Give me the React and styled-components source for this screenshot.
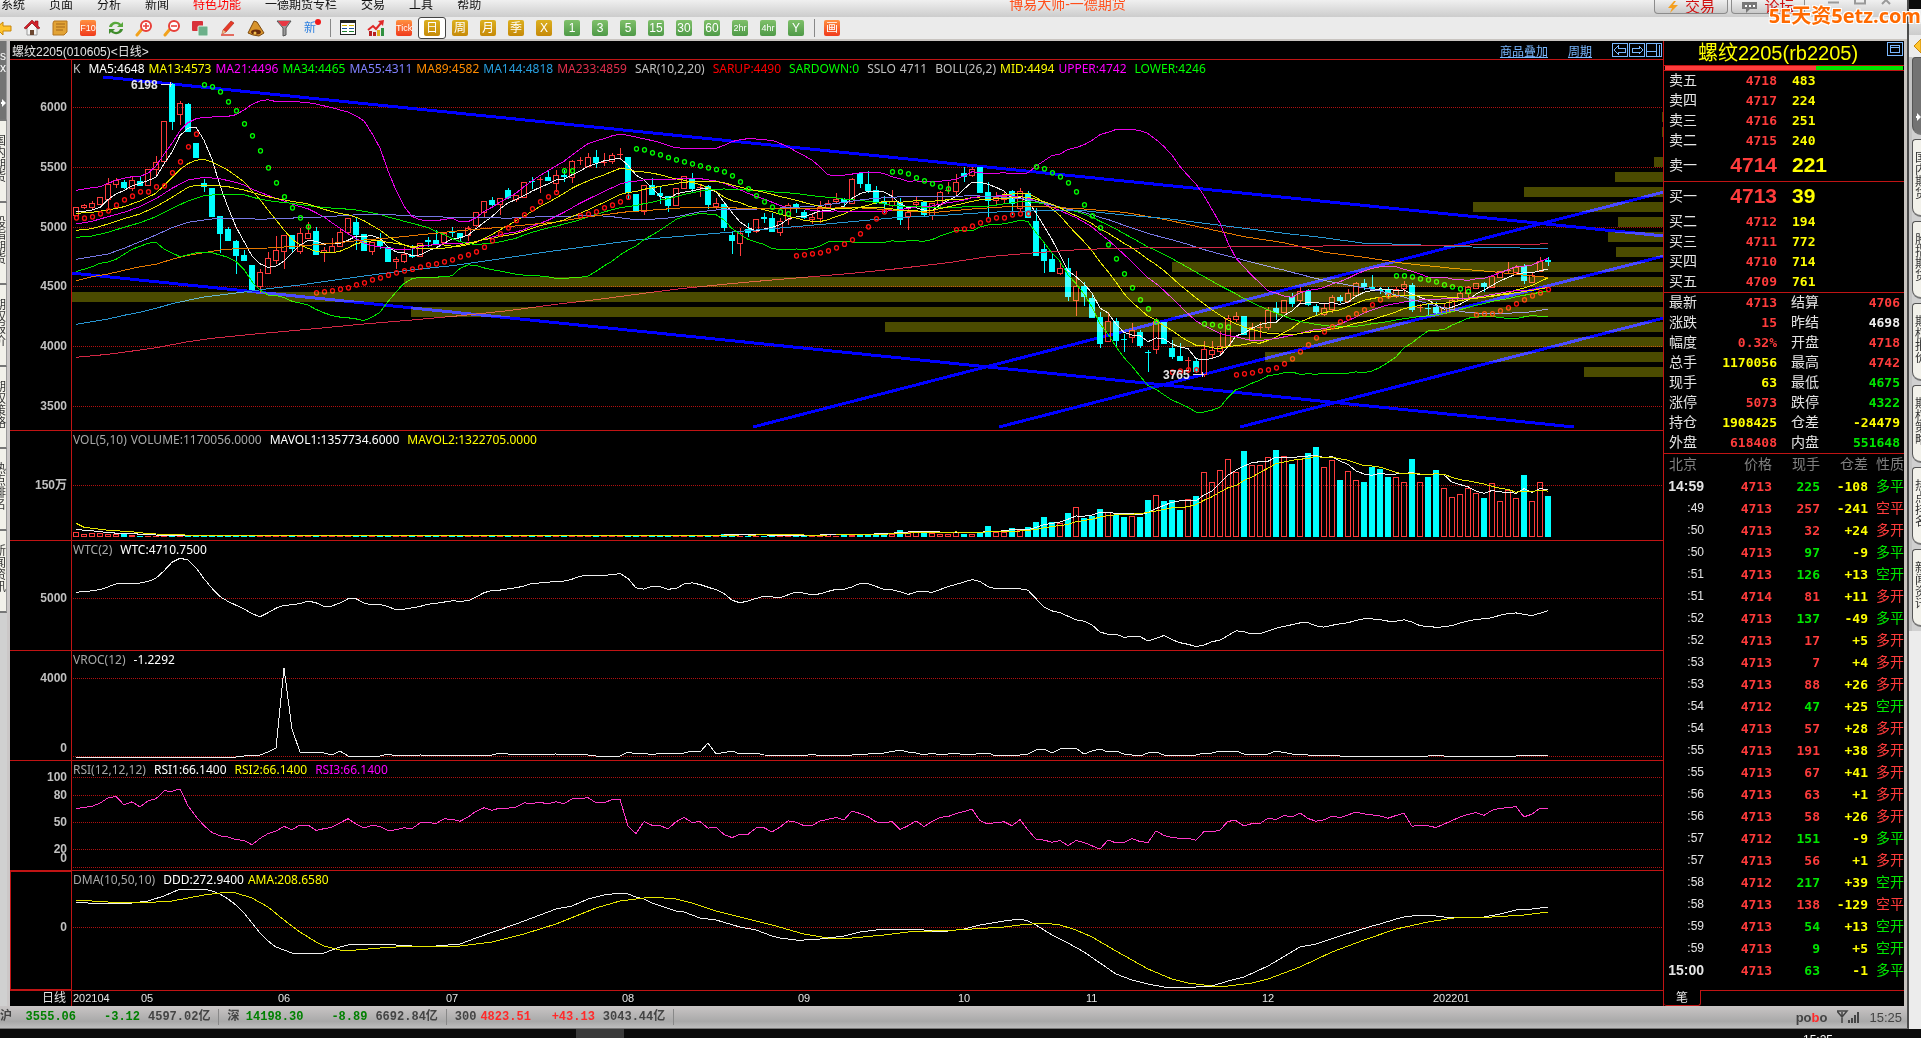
import React from 'react';
import styled, { createGlobalStyle } from 'styled-components';

const RED = '#ff3c3c';
const CYAN = '#00ffff';
const YELLOW = '#ffff00';
const GREEN = '#00e600';
const MAGENTA = '#ff00ff';
const LINE = '#c01414';

const GlobalStyle = createGlobalStyle`
  * { box-sizing: border-box; }
  body {
    margin: 0;
    background: #0b0b0b;
    font-family: "Liberation Sans", "Noto Sans CJK SC", sans-serif;
    font-size: 12px;
  }
  button {
    border: 0;
    padding: 0;
    background: none;
    font: inherit;
    color: inherit;
    cursor: pointer;
  }
`;

const Desktop = styled.div`
  position: relative;
  overflow: hidden;
  min-height: 100vh;
`;

const Windows = styled.div`
  display: flex;
`;

const MainWindow = styled.div`
  flex: 1;
  min-width: 0;
  border-right: 2px solid #4c4c4c;
  border-bottom: 1px solid #777;
  background: #c8c4c0;
`;

const MenuBar = styled.header`
  display: grid;
  grid-template-columns: 1fr auto 1fr;
  height: 17px;
  background: linear-gradient(#f0f0f0, #cccccc);
  color: #111;
`;

const Menu = styled.nav`
  display: flex;
  gap: 24px;
  padding-left: 1px;
  line-height: 10px;
  height: 12px;
  button {
    white-space: nowrap;
    height: 10px;
  }
`;

const MenuButton = styled.button`
  color: ${(p) => (p.$hot ? '#ff0000' : '#111')};
`;

const AppTitle = styled.div`
  font-size: 14px;
  line-height: 9px;
  color: #ff4f1a;
  padding-left: 228px;
`;

const WindowTools = styled.div`
  display: flex;
  justify-content: flex-end;
  gap: 3px;
  padding-right: 5px;
  svg { display: block; }
`;

const BigButton = styled.button`
  width: 74px;
  height: 14px;
  overflow: hidden;
  display: flex;
  justify-content: center;
  align-items: center;
  gap: 6px;
  border: 1px solid #8c8c8c;
  border-top: 0;
  border-radius: 0 0 4px 4px;
  background: linear-gradient(#efefef, #c9c9c9);
  color: #d01010;
  font-size: 15px;
  line-height: 10px;
`;

const WindowButtons = styled.div`
  display: flex;
  gap: 6px;
  width: 94px;
  height: 6px;
  padding-left: 15px;
`;

const ToolBar = styled.div`
  display: flex;
  align-items: center;
  height: 24px;
  margin-left: -10px;
  background: #ebebeb;
  border-bottom: 2px solid #c8c4c0;
`;

const Tool = styled.button`
  width: 28px;
  height: 22px;
  flex: none;
  display: flex;
  justify-content: center;
  align-items: center;
  ${(p) => p.$active && `
    background: #fff;
    border: 1px solid #444;
    border-radius: 3px;
  `}
  svg { display: block; }
`;

const tileColors = {
  gold: 'linear-gradient(#dcb020, #c68a08)',
  green: 'linear-gradient(#7fc06a, #4f9a48)',
  red: 'linear-gradient(#ff9040, #f03a1c)',
};

const Tile = styled.span`
  width: 16px;
  height: 16px;
  border-radius: 2px;
  background: ${(p) => tileColors[p.$tone]};
  color: #fff;
  font-size: ${(p) => (p.$small ? 9 : 12)}px;
  line-height: 16px;
  text-align: center;
  white-space: nowrap;
`;

const Separator = styled.span`
  width: 1px;
  height: 18px;
  margin: 0 3px 0 4px;
  background: #888;
`;

const Workspace = styled.main`
  display: flex;
  padding-right: 3px;
`;

const SideTabs = styled.aside`
  width: ${(p) => (p.$right ? 12 : 10)}px;
  flex: none;
  overflow: hidden;
  background: #d0d0d0;
  border-right: ${(p) => (p.$right ? 0 : '3px solid #cbc7c7')};
  border-left: ${(p) => (p.$right ? '3px solid #c4c4c4' : 0)};
`;

const SideTab = styled.button`
  display: flex;
  flex-direction: ${(p) => (p.$active ? 'column' : 'row')};
  align-items: center;
  justify-content: ${(p) => (p.$active ? 'space-between' : p.$right ? 'flex-start' : 'flex-end')};
  width: 100%;
  height: ${(p) => (p.$right ? 78 : p.$active ? 80 : 82)}px;
  margin-bottom: ${(p) => (p.$right ? 4 : 0)}px;
  padding: ${(p) => (p.$active ? '9px 0 12px' : '0 0 4px')};
  padding-left: ${(p) => (p.$right ? 2 : 0)}px;
  background: ${(p) => (p.$active ? '#737373' : '#f2f1ea')};
  color: ${(p) => (p.$active ? '#fff' : '#333')};
  border-bottom: 2px solid #777;
  ${(p) => (p.$right
    ? 'border-left: 1px solid #555; border-top: 1px solid #555; border-radius: 4px 0 0 10px;'
    : 'border-right: 1px solid #999;')}
  span {
    width: 12px;
    flex: none;
    line-height: 12px;
    white-space: normal;
    overflow-wrap: anywhere;
  }
  svg { flex: none; }
`;

const Charts = styled.section`
  flex: 1;
  min-width: 0;
  background: #000;
`;

const ChartHead = styled.div`
  display: flex;
  align-items: center;
  height: 19px;
  padding-left: 2px;
  border-bottom: 1px solid ${LINE};
  color: #e4e4e4;
  a {
    color: #7ab8ff;
    margin-right: 20px;
  }
`;

const HeadTools = styled.div`
  display: flex;
  align-items: center;
  margin-left: auto;
  svg { margin-right: 1px; }
`;

const Pane = styled.div`
  display: grid;
  grid-template-columns: 62px 1fr;
  height: ${(p) => p.$height}px;
  border-bottom: 1px solid ${LINE};
`;

const Axis = styled.div`
  border-right: 1px solid ${LINE};
  ${(p) => p.$selected && `outline: 1px solid ${LINE}; outline-offset: -1px;`}
  svg { display: block; }
  text {
    font: bold 12px "Liberation Sans", "Noto Sans CJK SC", sans-serif;
    fill: #c0c0c0;
    text-anchor: end;
  }
`;

const Plot = styled.div`
  position: relative;
  min-width: 0;
  > svg {
    display: block;
    width: 100%;
    height: 100%;
  }
`;

const Legend = styled.div`
  position: absolute;
  z-index: 1;
  top: 1px;
  left: 1px;
  display: flex;
  gap: 4px;
  font-family: "Noto Sans", sans-serif;
  line-height: 16px;
  white-space: nowrap;
`;

const LegendItem = styled.span`
  color: ${(p) => p.$color};
  margin-left: ${(p) => (p.$group ? 4 : 0)}px;
`;

const DateAxis = styled.div`
  display: grid;
  grid-template-columns: 62px 1fr;
  height: 15px;
  line-height: 15px;
  color: #e4e4e4;
  > span {
    text-align: right;
    padding-right: 5px;
    border-right: 1px solid ${LINE};
  }
  svg {
    display: block;
    width: 100%;
  }
  text {
    font: 11px "Liberation Sans", sans-serif;
    fill: #e4e4e4;
  }
`;

const Quote = styled.aside`
  width: 241px;
  flex: none;
  border-left: 1px solid ${LINE};
  background: #000;
  color: #e4e4e4;
`;

const QuoteHead = styled.div`
  display: flex;
  height: 24px;
  padding: 0 1px 0 34px;
  justify-content: space-between;
  color: ${YELLOW};
  font-size: 20px;
  line-height: 24px;
  svg { display: block; margin-top: 1px; }
`;

const Ratio = styled.div`
  display: flex;
  height: 6px;
  padding: 0 1px;
  border: solid ${LINE};
  border-width: 1px 0;
  &::before { content: ""; flex: 151; background: ${RED}; }
  &::after { content: ""; flex: 87; background: ${GREEN}; }
`;

const Book = styled.div`
  border-bottom: 1px solid ${LINE};
`;

const BookRow = styled.div`
  display: grid;
  grid-template-columns: 40px 68px 44px 1fr;
  align-items: center;
  height: ${(p) => (p.$best ? 30 : 20)}px;
  padding: 0 4px 2px 5px;
  font-size: 14px;
  line-height: 18px;
`;

const Num = styled.b`
  font: bold 13px "DejaVu Sans Mono", monospace;
  text-align: right;
  color: ${(p) => p.$color};
  ${(p) => p.$best && 'font: bold 21px "Liberation Sans", sans-serif;'}
  ${(p) => p.$left && 'text-align: left; padding-left: 15px;'}
`;

const StatLabel = styled.span`
  padding-left: ${(p) => (p.$second ? 14 : 0)}px;
`;

const Ticks = styled.table`
  width: 100%;
  table-layout: fixed;
  border-collapse: collapse;
  margin-bottom: 8px;
  font-size: 14px;
  tr { height: 22px; }
  th, td {
    padding: 0;
    text-align: right;
    vertical-align: top;
    font-weight: normal;
    line-height: 20px;
    white-space: nowrap;
  }
  th { color: #808080; }
  th:first-child { text-align: left; padding-left: 5px; }
`;

const TickTime = styled.td`
  && {
    font-size: ${(p) => (p.$full ? 14 : 12)}px;
    font-weight: ${(p) => (p.$full ? 'bold' : 'normal')};
  }
`;

const Kind = styled.td`
  color: ${(p) => p.$color};
`;

const QuoteTabs = styled.div`
  display: flex;
  height: 16px;
  button {
    width: 37px;
    border: 1px solid ${LINE};
    border-width: 0 1px 1px 0;
    border-radius: 0 0 3px 3px;
    line-height: 14px;
  }
  &::after {
    content: "";
    flex: 1;
    border-top: 1px solid ${LINE};
  }
`;

const StatusBar = styled.footer`
  display: flex;
  align-items: center;
  height: 22px;
  padding-right: 5px;
  background: linear-gradient(#c9c5c5, #a9a9a9 70%, #bdbdbd);
  color: #444;
  font: bold 12px "Liberation Mono", "Noto Sans CJK SC", monospace;
`;

const Index = styled.div`
  display: grid;
  grid-template-columns: ${(p) => p.$cols};
  align-items: baseline;
  height: 16px;
  line-height: 16px;
  padding-right: 8px;
  margin-right: 8px;
  border-right: 1px solid #888;
  white-space: nowrap;
  i {
    font-style: normal;
    text-align: right;
    padding-right: 8px;
    color: ${(p) => p.$color};
  }
`;

const StatusRight = styled.div`
  display: flex;
  align-items: center;
  gap: 10px;
  margin-left: auto;
  font: 13px "Liberation Sans", sans-serif;
  b em { font-style: normal; color: #ff2a2a; }
`;

const SecondWindow = styled.div`
  width: 12px;
  flex: none;
  margin-top: 9px;
  background: #ececec;
  > svg { display: block; }
`;

const SecondHead = styled.div`
  height: 26px;
  background: linear-gradient(#f2f2f2, #cccccc);
`;

const TaskBar = styled.div`
  display: flex;
  height: 9px;
  overflow: hidden;
  background: #0b0b0b;
  color: #fff;
  line-height: 22px;
  padding-left: 576px;
  justify-content: space-between;
  &::before { content: ""; width: 48px; background: #3a3a3a; }
  span { padding-right: 88px; }
`;

const Watermark = styled.div`
  position: absolute;
  top: 0;
  right: 0;
  font: bold 20px/32px "Open Sans", "Noto Sans CJK SC", sans-serif;
  color: #ff6a00;
  text-shadow: 1px 1px 0 #fff, -1px -1px 0 #fff, 1px -1px 0 #fff, -1px 1px 0 #fff;
`;

// ---------- chart data ----------
// Levels are kept in thirds of a pixel: direction, body, then high/low wick.
const candles = `
r622-645 r616-622/612-627 r610-622/603-627 r592-612 r552-598/535-625 r540-553/533-565 c545-563/541-567 r541-565/530-572
c543-557/530-558 r508-556 r487-506/468-530 r364-482 c253-365/250-390 r310-343/303-375 c312-395/308-395 c430-473
c550-562/537-575 c565-650 c648-702/648-760 c688-722/680-722 c723-767/720-822 c766-782/750-782 c795-869 r817-858/808-880
r775-818/755-818 r750-780/708-793 r706-752/706-808 c706-748/706-760 r700-752/685-762 r700-713/665-715 c693-765/680-765
r750-757/742-785 r737-755/715-755 r697-737/685-737 r655-697 c666-705/650-750 c702-752 r725-752/725-765 c723-738/700-748
c741-785 r778-782/770-806 r763-784/740-790 c765-770/735-773 r728-769 c720-725/710-740 c720-732/690-732 r698-725
c697-700/682-712 c700-713/700-723 r683-706/678-722 r637-674/637-680 r602-637/602-655 c600-615/592-622 r595-612/595-645
c570-595/565-598 r586-597/586-606 r545-590 c543-547/530-567 r538-541/530-578 c532-543/512-543 r525-548/510-576
c526-532/510-545 r484-532/480-550 r481-484/472-495 r472-497/460-497 c472-488/450-503 r487-490/460-497 r464-484/458-492
r461-464/444-480 c472-578/472-600 c582-637 r556-632/556-645 c555-585/535-585 c578-588/562-612 c588-617/588-637 r565-614
r527-565 c536-566/520-575 r560-565/553-590 c559-615/555-627 r608-618/595-627 c612-683/612-692 c705-722/695-762
r700-730/683-767 c688-700/668-712 r658-694/658-700 c652-656/640-668 c655-695/640-695 r663-697/655-708 r615-658/608-675
c613-625/608-640 c635-653/630-657 r652-657/640-672 r622-654/603-670 r608-622/600-628 r596-602/580-612 c598-610/593-622
r538-610/533-610 c520-553/520-565 c552-572/513-578 c570-605/558-612 c602-612/588-640 r603-615/570-620 c605-660/593-675
r637-647/625-690 r605-613/590-620 c606-645/606-648 r610-645/610-660 r577-612/573-625 r571-574/545-583 r547-574/522-592
c519-530/500-545 r508-525/500-530 c502-578 c577-602/545-655 r592-600/577-612 r587-597/575-610 c573-613/570-645
r572-625/564-632 c578-655/573-655 c663-768/625-768 c747-782/727-820 c777-815/760-815 r805-818/788-825 c804-890/773-902
r857-900/812-948 c857-890/845-918 c893-953/880-953 c950-1031/935-1043 r963-1022/935-1022 c963-1022/955-1045
c1016-1019/1003-1055 r990-1010/970-1028 c996-1038/990-1045 c1055-1058/1050-1115 r963-1046/955-1063 c967-1033
c1044-1070/1020-1076 c1068-1082/1030-1082 r1080-1083/1070-1118 c1083-1117/1075-1120 r1047-1123/1022-1130
r1051-1061/1023-1073 r1037-1052/993-1065 r955-1037/945-1037 r948-956/937-965 c948-1004 r980-1021/968-1023
r980-983/967-1013 r930-980/920-990 c923-940/905-960 r901-935/901-940 c890-912/880-920 r873-901/860-912 c873-914/867-918
c918-936/912-945 r924-941/910-948 r890-927/885-938 c890-902/885-910 r879-902/868-908 r850-884/845-884 c849-862/838-870
c860-868/825-870 c866-874/860-882 c866-886/862-897 r868-888/862-895 r852-865/842-888 c855-930/850-937 r922-925/912-935
c925-928/910-945 c920-938/907-945 r920-938/910-943 r900-933/895-933 r879-900/873-900 r862-880/857-900 r850-864
c849-862/845-877 r828-862 r812-830 r810-813/787-822 r801-817/795-825 c797-842/793-853 r825-846/820-848 r783-812/770-815
c780-786/770-798`.trim().split(/\s+/).map((s) => {
  const [top, bottom, high, low] = s.match(/\d+/g).map(Number);
  const up = s[0] === 'r';
  return { up, top, bottom, high: high || top, low: low || bottom, close: up ? top : bottom };
});

const volumes = [15, 9, 12, 12, 10, 8, 8, 6];
while (volumes.length < 79) volumes.push(3);
volumes.push(5, 4, 8, 8, 4, 4, 4, 4, 4, 4, 4, 4, 4, 5, 5, 8, 4, 5, 6, 8, 10, 10, 12, 10, 20, 16, 16, 14, 12,
  10, 10, 16, 8, 8, 16, 32, 14, 16, 26, 20, 29, 44, 59, 44, 42, 71, 91, 56, 62, 83, 76, 66, 59, 64, 59, 110, 127,
  107, 110, 80, 115, 122, 196, 166, 202, 235, 196, 257, 217, 217, 241, 260, 244, 218, 235, 251, 269, 211, 232, 170,
  199, 172, 164, 211, 203, 179, 181, 166, 233, 166, 179, 200, 148, 121, 130, 148, 133, 116, 163, 109, 142, 118, 185,
  109, 166, 122);

const closes = candles.map((c) => c.close);
const X = (i) => 76 + i * 8;

const average = (list, n, i) => list.slice(i - n + 1, i + 1).reduce((a, b) => a + b, 0) / n;

// lead holds [index, level] pairs for the stretch before n values exist
const movingAverage = (list, n, lead = []) => {
  const out = lead.slice();
  for (let i = n - 1; i < list.length; i++) out.push([i, average(list, n, i)]);
  return out;
};

const band = (side, lead) => {
  const out = lead.slice();
  for (let i = 25; i < closes.length; i++) {
    const mid = average(closes, 26, i);
    const dev = Math.sqrt(closes.slice(i - 25, i + 1).reduce((a, c) => a + (c - mid) ** 2, 0) / 26);
    out.push([i, mid + side * 2 * dev]);
  }
  return out;
};

const thirds = (list) => list.map(([i, v]) => [i, v / 3]);
const toPoints = (list) => list.map(([i, y]) => `${X(i)},${y.toFixed(1)}`).join(' ');

const ma89 = [[0, 842], [2, 830], [4, 822], [6, 811], [8, 800], [10, 793], [12, 778], [14, 766], [16, 758], [18, 750],
  [20, 746], [24, 744], [28, 738], [32, 730], [36, 720], [40, 712], [44, 702], [48, 692], [54, 680], [60, 666], [63, 654],
  [66, 644], [69, 635], [71, 632], [76, 623], [81, 623], [86, 626], [92, 627], [97, 622], [102, 630], [107, 638],
  [112, 627], [117, 619], [120, 619], [126, 627], [131, 637], [136, 658], [141, 684], [146, 710], [151, 728], [156, 757],
  [161, 772], [166, 790], [172, 805], [177, 815], [182, 828], [184, 832]];
const ma144 = [[0, 973], [2, 965], [4, 957], [6, 946], [8, 937], [10, 925], [12, 911], [14, 901], [16, 891], [19, 882],
  [22, 873], [24, 866], [28, 855], [33, 838], [41, 812], [47, 797], [52, 780], [59, 755], [70, 720], [76, 708], [81, 698],
  [89, 682], [97, 665], [102, 654], [109, 645], [114, 637], [120, 632], [126, 632], [131, 645], [136, 655], [141, 670],
  [146, 685], [151, 700], [156, 713], [161, 730], [166, 733], [171, 738], [177, 743], [184, 745]];
const ma233 = [[0, 1072], [4, 1063], [8, 1050], [10, 1043], [12, 1034], [14, 1025], [17, 1015], [22, 1003], [29, 988],
  [36, 972], [42, 960], [48, 947], [54, 932], [60, 913], [65, 899], [71, 880], [76, 865], [81, 853], [86, 842],
  [92, 830], [97, 820], [102, 808], [109, 788], [114, 770], [120, 758], [126, 748], [133, 744], [141, 742], [151, 739],
  [161, 737], [171, 736], [182, 733], [184, 731]];

const overlays = [
  ['#eeeeee', movingAverage(closes, 5, [[0, 636], [1, 634], [2, 630], [3, 622]])],
  ['#e6e600', movingAverage(closes, 13, [[0, 640], [2, 637], [4, 630], [6, 620], [8, 603], [10, 580]])],
  ['#e600e6', movingAverage(closes, 21, [[0, 672], [2, 664], [4, 650], [6, 637], [8, 620], [10, 596], [12, 565],
    [14, 540], [16, 532], [18, 536]])],
  ['#00e600', movingAverage(closes, 34, [[0, 712], [2, 708], [4, 697], [6, 682], [8, 668], [10, 650], [12, 625],
    [14, 603], [16, 587], [18, 583], [21, 584], [23, 598], [25, 605], [27, 610], [30, 620]])],
  ['#7878e6', movingAverage(closes, 55, [[0, 778], [2, 770], [4, 762], [6, 745], [8, 725], [10, 705], [12, 683],
    [14, 667], [16, 660], [18, 654], [21, 655], [23, 658], [26, 655], [30, 652], [36, 643], [40, 645], [44, 650],
    [50, 653]])],
  ['#e67800', ma89],
  ['#2896d2', ma144],
  ['#d22846', ma233],
  ['#e6e600', movingAverage(closes, 26, [[0, 691], [2, 686], [4, 672], [6, 656], [8, 642], [10, 620], [12, 592],
    [14, 562], [15, 556], [17, 556], [19, 560], [21, 570], [23, 584]])],
  ['#e600e6', band(-1, [[0, 571], [1, 567], [2, 563], [3, 560], [4, 550], [5, 541], [6, 535], [7, 530], [8, 529],
    [9, 520], [10, 498], [11, 463], [12, 430], [13, 392], [14, 368], [15, 356], [16, 352], [18, 350], [19, 349],
    [20, 344], [21, 330], [22, 313], [23, 303], [24, 299]])],
  ['#00e600', band(1, [[0, 815], [2, 800], [3, 790], [4, 786], [5, 778], [7, 748], [9, 730], [10, 727], [11, 747],
    [13, 770], [15, 758], [17, 758], [19, 772], [20, 785], [21, 808], [22, 845], [23, 870], [24, 885]])],
];

const UP_DOT = '#ff1010';
const DOWN_DOT = '#00ff00';

const sar = [
  [UP_DOT, 0, [652, 653, 649, 640, 631, 614, 598, 587, 574, 574, 559, 556, 517, 484, 439, 401]],
  [DOWN_DOT, 16, [253, 259, 274, 304, 331, 370, 406, 451, 502, 547, 589, 622, 652, 679]],
  [UP_DOT, 30, [877, 874, 871, 866, 862, 853, 847, 838, 832, 824, 817, 811, 806, 800, 793, 790, 784, 778, 769, 763, 754,
    740, 721, 700, 682, 660, 643, 625, 604, 589, 576]],
  [DOWN_DOT, 61, [511, 511]],
  [UP_DOT, 63, [646, 641, 634, 622, 614, 604, 590]],
  [DOWN_DOT, 70, [445, 448, 457, 463, 471, 478, 484, 490, 496, 502, 507, 514, 526, 544, 565, 586, 604, 620, 634, 640]],
  [UP_DOT, 90, [766, 763, 760, 757, 751, 742, 731, 718, 700, 679, 655, 634]],
  [DOWN_DOT, 102, [514, 514, 520, 532, 541, 550, 559, 565]],
  [UP_DOT, 110, [688, 686, 677, 667, 658, 652, 652, 643, 640, 640]],
  [DOWN_DOT, 120, [499, 505, 517, 529, 547, 574, 613, 646, 682, 733, 775, 820, 862, 898, 925, 964]],
  [UP_DOT, 137, [1115, 1112, 1108, 1108]],
  [DOWN_DOT, 141, [970, 972, 976, 980]],
  [UP_DOT, 145, [1123, 1120, 1117, 1111, 1108, 1102, 1090, 1075, 1054, 1033, 1012, 994, 979, 964, 952, 940, 928, 913,
    898, 886]],
  [DOWN_DOT, 165, [826, 826, 829, 835, 838, 844, 853, 859, 865, 873]],
  [UP_DOT, 175, [943, 940, 940, 931, 922, 910, 898, 886, 877, 867]],
];

// volume by price: one bar every 15px, null where a level has none
const profile = [1662, 1662, null, 1654, 1615, 1524, 1473, 1618, 1608, 1616, 1172, 404, 71, 411, 885, 1172, 1265, 1584];

const trends = [[103, 77, 1664, 236], [71, 273, 1574, 427], [753, 427, 1664, 192], [999, 427, 1664, 256], [1240, 427, 1664, 318]];

const wtcBase = candles.map((c) => (c.high + c.low + 2 * c.close) / 12);
const wtc = wtcBase.map((v, i) => [i, 598.5 + ((v + (i ? wtcBase[i - 1] : v)) / 2 - 227.3) * 0.347]);

const rsi = [];
let gain = 9.8;
let loss = 5.2;
closes.forEach((c, i) => {
  if (i) {
    const d = closes[i - 1] - c;
    gain = (gain * 11 + Math.max(d, 0)) / 12;
    loss = (loss * 11 + Math.max(-d, 0)) / 12;
  }
  rsi.push([i, 867.3 - (gain / (gain + loss)) * 90]);
});

const vroc = [[0, 757], [20, 757], [22, 755], [23, 755], [24, 752], [25, 748], [26, 668], [27, 729], [28, 752], [31, 753],
  [32, 755], [33, 751], [34, 756], [38, 756], [39, 754], [40, 756], [43, 755], [48, 756], [52, 755], [53, 753], [55, 755],
  [60, 754], [64, 755], [65, 756], [68, 756], [69, 752], [70, 754], [71, 753], [72, 755], [73, 753], [76, 753], [77, 751],
  [78, 752], [79, 743], [80, 754], [82, 751], [83, 754], [85, 753], [86, 755], [91, 756], [92, 754], [93, 756], [97, 755],
  [101, 753], [103, 750], [104, 752], [105, 753], [106, 755], [107, 753], [108, 755], [110, 753], [111, 755], [114, 753],
  [115, 756], [118, 755], [119, 754], [120, 750], [121, 749], [122, 753], [123, 749], [125, 748], [126, 754], [127, 751],
  [128, 749], [129, 752], [130, 751], [131, 754], [133, 756], [134, 753], [135, 752], [136, 755], [140, 755], [141, 753],
  [142, 753], [143, 751], [145, 751], [146, 754], [149, 754], [150, 751], [152, 754], [156, 756], [157, 755], [158, 756],
  [169, 756], [170, 755], [171, 756], [180, 756], [181, 755], [182, 756], [183, 755], [184, 756]];

const ddd = [[0, 902], [3, 904], [7, 903], [9, 901], [11, 896], [13, 889], [16, 889], [17, 891], [18, 894], [19, 899],
  [20, 905], [21, 913], [22, 923], [23, 933], [24, 941], [25, 947], [26, 950], [27, 953], [31, 953], [33, 947], [34, 945],
  [36, 944], [38, 944], [42, 946], [45, 946], [48, 944], [50, 938], [55, 924], [60, 909], [62, 906], [64, 899], [66, 895],
  [68, 893], [69, 894], [70, 897], [71, 899], [72, 903], [75, 911], [76, 912], [78, 918], [80, 920], [83, 927], [85, 930],
  [87, 936], [88, 938], [90, 940], [91, 940], [93, 939], [96, 936], [98, 932], [101, 929], [105, 929], [107, 931],
  [109, 931], [111, 929], [113, 925], [116, 921], [118, 919], [119, 921], [120, 925], [122, 935], [124, 943], [126, 952],
  [130, 974], [132, 980], [134, 984], [136, 987], [140, 987], [142, 986], [144, 981], [146, 977], [149, 966], [153, 947],
  [155, 944], [158, 936], [162, 926], [163, 924], [165, 919], [166, 917], [168, 915], [170, 916], [171, 917], [176, 917],
  [178, 914], [180, 910], [182, 909], [184, 907]];
const ama = [[0, 900], [4, 902], [8, 903], [12, 901], [14, 898], [16, 895], [18, 893], [19, 892], [20, 893], [22, 898],
  [24, 907], [26, 920], [28, 932], [30, 942], [31, 946], [33, 950], [35, 950], [38, 948], [42, 946], [48, 946], [52, 942],
  [56, 934], [60, 924], [65, 908], [68, 901], [71, 898], [72, 897], [75, 899], [77, 903], [80, 911], [83, 917], [87, 925],
  [91, 934], [94, 938], [97, 938], [101, 935], [104, 932], [107, 931], [110, 930], [116, 927], [118, 925], [121, 923],
  [123, 925], [125, 930], [127, 937], [130, 951], [134, 969], [137, 979], [139, 983], [142, 986], [144, 986], [147, 983],
  [149, 979], [153, 967], [157, 952], [161, 940], [165, 929], [169, 922], [173, 917], [177, 917], [181, 915], [184, 912]];

// ---------- chart pieces ----------
const Curve = ({ color, data, width = 1 }) => (
  <polyline points={toPoints(data)} fill="none" stroke={color} strokeWidth={width} shapeRendering="crispEdges" />
);

const ChartPane = ({ top, height, ticks, legend, selected, children }) => (
  <Pane $height={height + 1}>
    <Axis $selected={selected}>
      <svg width="61" height={height} viewBox={`10 ${top} 61 ${height}`}>
        {ticks.map(([label, y, at]) => (
          <text key={label} x="67" y={(at || y) + 4}>{label}</text>
        ))}
      </svg>
    </Axis>
    <Plot>
      <Legend>
        {legend.map(([text, color, group]) => (
          <LegendItem key={text} $color={color} $group={group}>{text}</LegendItem>
        ))}
      </Legend>
      <svg viewBox={`72 ${top} 1591 ${height}`} preserveAspectRatio="none">
        {ticks.map(([label, y]) => (
          <line key={label} x1="73" x2="1662" y1={y + 0.5} y2={y + 0.5} stroke="#b01010" strokeDasharray="1 1" shapeRendering="crispEdges" />
        ))}
        {children}
      </svg>
    </Plot>
  </Pane>
);

const Candle = ({ data, i }) => {
  const x = X(i);
  const color = data.up ? RED : CYAN;
  const top = Math.round(data.top / 3);
  const h = Math.max(1, Math.round(data.bottom / 3) - top);
  const high = Math.round(data.high / 3);
  const low = Math.round(data.low / 3);
  return (
    <g shapeRendering="crispEdges">
      {high < top && <rect x={x} y={high} width="1" height={top - high} fill={color} />}
      {low > top + h && <rect x={x} y={top + h} width="1" height={low - top - h} fill={color} />}
      {data.up && h > 1 ? (
        <rect x={x - 2.5} y={top + 0.5} width="5" height={h} fill="none" stroke={color} />
      ) : (
        <rect x={x - 3} y={top} width="6" height={h} fill={color} />
      )}
    </g>
  );
};

const Volume = ({ value, up, i }) => {
  const h = Math.max(1, Math.round(value / 3));
  return up && h > 2 ? (
    <rect x={X(i) - 2.5} y={537.5 - h} width="5" height={h - 1} fill="none" stroke={RED} shapeRendering="crispEdges" />
  ) : (
    <rect x={X(i) - 3} y={537 - h} width="6" height={h} fill={up ? RED : CYAN} shapeRendering="crispEdges" />
  );
};

const volumeLine = (n, lead) => movingAverage(volumes, n, lead).map(([i, v]) => [i, 536.5 - v / 3]);

const BoxIcon = ({ children }) => (
  <svg width="16" height="15" viewBox="0 0 16 15" fill="none" stroke="#7ab8ff" shapeRendering="crispEdges">
    <rect x="0.5" y="0.5" width="15" height="13" />
    {children}
  </svg>
);

const TabArrow = () => (
  <svg width="6" height="8" viewBox="0 0 6 8"><path d="M1 3h1V0l4 4-4 4V5H1Z" fill="#fff" /></svg>
);

// ---------- toolbar ----------
const Glyph = ({ children }) => <svg width="18" height="18" viewBox="0 0 18 18">{children}</svg>;

const icons = {
  back: <path d="M1 9 8 3v4h8v5H8v4Z" fill="#ffc52e" stroke="#c8860a" />,
  home: (
    <>
      <path d="M4 9v7h10V9L9 4Z" fill="#f4f4f4" stroke="#999" />
      <path d="M1 9 9 1l3 3V2h3v5l2 2-2 1-6-6-6 6Z" fill="#d3202a" stroke="#8c1016" strokeWidth=".6" />
      <path d="M7 16v-5h4v5Z" fill="#6b4630" />
    </>
  ),
  scroll: (
    <>
      <path d="M3 2h13v11l-3 3H2V4Z" fill="#e2a336" stroke="#b4741c" />
      <path d="M5 5h9M5 8h9M5 11h7" stroke="#a4661a" />
    </>
  ),
  refresh: (
    <>
      <path d="M2 8c1-5 8-7 12-3l2-2v5h-6l2-2C9 4 6 5 5 8Z" fill="#58a83c" />
      <path d="M16 10c-1 5-8 7-12 3l-2 2v-5h6l-2 2c3 2 6 1 7-2Z" fill="#3f8c2c" />
    </>
  ),
  zoomIn: (
    <>
      <path d="m2 16 5-6" stroke="#f2a21c" strokeWidth="3" strokeLinecap="round" />
      <circle cx="11" cy="7" r="5" fill="#fff" stroke="#e8403a" strokeWidth="2" />
      <path d="M8 7h6M11 4v6" stroke="#e8403a" strokeWidth="1.6" />
    </>
  ),
  zoomOut: (
    <>
      <path d="m2 16 5-6" stroke="#f2a21c" strokeWidth="3" strokeLinecap="round" />
      <circle cx="11" cy="7" r="5" fill="#fff" stroke="#e8403a" strokeWidth="2" />
      <path d="M8 7h6" stroke="#e8403a" strokeWidth="1.6" />
    </>
  ),
  squares: (
    <>
      <rect x="1" y="2" width="11" height="10" rx="1" fill="#d8323a" />
      <rect x="7" y="7" width="10" height="10" rx="1" fill="#6cb08a" stroke="#e8f4ec" />
    </>
  ),
  pencil: (
    <>
      <path d="m3 15 1-4 8-9 3 2-8 9Z" fill="#e83a28" stroke="#a82014" strokeWidth=".6" />
      <path d="m3 15 1-4 3 2Z" fill="#e8c088" />
      <path d="M2 16h13" stroke="#e04030" strokeWidth="1.5" />
    </>
  ),
  bell: (
    <>
      <path d="m1 14 6-12 3 1 7 11-5 3-6-1Z" fill="#d8942c" stroke="#7c4a10" />
      <ellipse cx="9" cy="13" rx="5" ry="2.5" fill="#6a2c0c" />
      <circle cx="8" cy="14" r="1.5" fill="#f0c050" />
    </>
  ),
  funnel: (
    <>
      <path d="M2 2h14l-5 7v7l-3 1V9Z" fill="#9a9a9a" stroke="#555" />
      <path d="M3 2h12l-4 5H7Z" fill="#e83844" />
    </>
  ),
  list: (
    <>
      <rect x="1.5" y="1.5" width="15" height="14" fill="#fff" stroke="#222" />
      <path d="M2 3h14" stroke="#222" strokeWidth="2" />
      <path d="M3 6.500h5M10 6.500h5" stroke="#d8b400" />
      <path d="M3 9.500h5M10 9.500h5" stroke="#1a50a0" />
      <path d="M3 12.500h5M10 12.500h5" stroke="#1c8030" />
    </>
  ),
  trend: (
    <>
      <path d="M2 12h3v5H2ZM6 13h3v4H6Z" fill="#b82020" />
      <path d="M10 11h3v6h-3Z" fill="#e0b020" />
      <path d="M14 9h3v8h-3Z" fill="#309040" />
      <path d="m1 11 5-4 3 3 5-6" fill="none" stroke="#e02828" strokeWidth="2" />
      <path d="m11 2 6-1-1 6Z" fill="#e02828" />
    </>
  ),
};

const tools = [
  ['后退', 'back'], ['首页', 'home'], ['公告', 'scroll'], ['F10'], ['刷新', 'refresh'], ['放大', 'zoomIn'],
  ['缩小', 'zoomOut'], ['叠加', 'squares'], ['画笔', 'pencil'], ['预警', 'bell'], ['筛选', 'funnel'],
];

const periods = [
  ['Tick', 'red', true], ['日', 'gold'], ['周', 'gold'], ['月', 'gold'], ['季', 'gold'], ['X', 'gold'], ['1', 'green'],
  ['3', 'green'], ['5', 'green'], ['15', 'green'], ['30', 'green'], ['60', 'green'], ['2hr', 'green', true],
  ['4hr', 'green', true], ['Y', 'green'],
];

const NewsMark = styled.span`
  position: relative;
  width: 16px;
  font-size: 12px;
  line-height: 18px;
  color: #2f80e0;
  text-align: left;
  &::after {
    content: "";
    position: absolute;
    top: 0;
    right: -1px;
    width: 6px;
    height: 6px;
    border-radius: 3px;
    background: #f01818;
  }
`;

const Tools = () => (
  <ToolBar>
    {tools.map(([name, icon]) => (
      <Tool key={name} aria-label={name}>
        {icon ? <Glyph>{icons[icon]}</Glyph> : <Tile $tone="red" $small>F10</Tile>}
      </Tool>
    ))}
    <Tool><NewsMark>新</NewsMark></Tool>
    <Separator />
    <Tool aria-label="报价"><Glyph>{icons.list}</Glyph></Tool>
    <Tool aria-label="走势"><Glyph>{icons.trend}</Glyph></Tool>
    {periods.map(([name, tone, small]) => (
      <Tool key={name} $active={name === '日'}>
        <Tile $tone={tone} $small={small}>{name}</Tile>
      </Tool>
    ))}
    <Separator />
    <Tool><Tile $tone="red">画</Tile></Tool>
  </ToolBar>
);

// ---------- quote panel ----------
const asks = [['卖五', 4718, 483], ['卖四', 4717, 224], ['卖三', 4716, 251], ['卖二', 4715, 240], ['卖一', 4714, 221]];
const bids = [['买一', 4713, 39], ['买二', 4712, 194], ['买三', 4711, 772], ['买四', 4710, 714], ['买五', 4709, 761]];

const WHITE = '#f0f0f0';
const stats = [
  ['最新', '4713', RED, '结算', '4706', RED],
  ['涨跌', '15', RED, '昨结', '4698', WHITE],
  ['幅度', '0.32%', RED, '开盘', '4718', RED],
  ['总手', '1170056', YELLOW, '最高', '4742', RED],
  ['现手', '63', YELLOW, '最低', '4675', GREEN],
  ['涨停', '5073', RED, '跌停', '4322', GREEN],
  ['持仓', '1908425', YELLOW, '仓差', '-24479', YELLOW],
  ['外盘', '618408', RED, '内盘', '551648', GREEN],
];

const ticks = `14:59 4713 225 -108 多平,:49 4713 257 -241 空平,:50 4713 32 +24 多开,:50 4713 97 -9 多平,
:51 4713 126 +13 空开,:51 4714 81 +11 多开,:52 4713 137 -49 多平,:52 4713 17 +5 多开,:53 4713 7 +4 多开,
:53 4713 88 +26 多开,:54 4712 47 +25 空开,:54 4713 57 +28 多开,:55 4713 191 +38 多开,:55 4713 67 +41 多开,
:56 4713 63 +1 多开,:56 4713 58 +26 多开,:57 4712 151 -9 多平,:57 4713 56 +1 多开,:58 4712 217 +39 空开,
:58 4713 138 -129 空平,:59 4713 54 +13 空开,:59 4713 9 +5 空开,15:00 4713 63 -1 多平`
  .split(',').map((row) => row.trim().split(' '));

const BookRows = ({ rows }) => (
  <Book>
    {rows.map(([label, price, qty]) => {
      const best = label.endsWith('一');
      return (
        <BookRow key={label} $best={best}>
          <span>{label}</span>
          <Num $color={RED} $best={best}>{price}</Num>
          <Num $color={YELLOW} $best={best} $left>{qty}</Num>
        </BookRow>
      );
    })}
  </Book>
);

const QuotePanel = () => (
  <Quote>
    <QuoteHead>
      <span>螺纹2205(rb2205)</span>
      <BoxIcon><rect x="3.5" y="3.5" width="9" height="7" /><path d="M3 5h10" /></BoxIcon>
    </QuoteHead>
    <Ratio />
    <BookRows rows={asks} />
    <BookRows rows={bids} />
    <Book>
      {stats.map(([a, va, ca, b, vb, cb]) => (
        <BookRow key={a}>
          <StatLabel>{a}</StatLabel>
          <Num $color={ca}>{va}</Num>
          <StatLabel $second>{b}</StatLabel>
          <Num $color={cb}>{vb}</Num>
        </BookRow>
      ))}
    </Book>
    <Ticks>
      <colgroup>
        <col width="40" /><col width="68" /><col width="48" /><col width="48" /><col width="36" />
      </colgroup>
      <thead>
        <tr><th>北京</th><th>价格</th><th>现手</th><th>仓差</th><th>性质</th></tr>
      </thead>
      <tbody>
        {ticks.map(([time, price, qty, diff, kind], i) => {
          const color = kind === '多平' || kind === '空开' ? GREEN : RED;
          return (
            <tr key={i}>
              <TickTime $full={time.length > 3}>{time}</TickTime>
              <td><Num $color={RED}>{price}</Num></td>
              <td><Num $color={color}>{qty}</Num></td>
              <td><Num $color={YELLOW}>{diff}</Num></td>
              <Kind $color={color}>{kind}</Kind>
            </tr>
          );
        })}
      </tbody>
    </Ticks>
    <QuoteTabs><button>笔</button></QuoteTabs>
  </Quote>
);

const menu = ['系统', '页面', '分析', '新闻', '特色功能', '一德期货专栏', '交易', '工具', '帮助'];
const sideTabs = ['国内期货', '股指期货', '期权报价', '期权策略', '热点排名', '新闻资讯'];
const months = [['202104', 73], ['05', 141], ['06', 278], ['07', 446], ['08', 622], ['09', 798], ['10', 958], ['11', 1086],
  ['12', 1262], ['202201', 1433]];

const kLegend = [
  ['K', '#c0c0c0'], ['MA5:4648', '#fff', true], ['MA13:4573', YELLOW], ['MA21:4496', MAGENTA], ['MA34:4465', '#00ff00'],
  ['MA55:4311', '#8080ff'], ['MA89:4582', '#ff8c00'], ['MA144:4818', '#28a0e0'], ['MA233:4859', '#e0304c'],
  ['SAR(10,2,20)', '#c0c0c0', true], ['SARUP:4490', '#ff0000', true], ['SARDOWN:0', '#00ff00', true],
  ['SSLO', '#c0c0c0', true], ['4711', '#c0c0c0'], ['BOLL(26,2)', '#c0c0c0', true], ['MID:4494', YELLOW],
  ['UPPER:4742', MAGENTA], ['LOWER:4246', '#00ff00', true],
];

const GREY = '#a8a8a8';

function App() {
  return (
    <Desktop>
      <GlobalStyle />
      <Windows>
        <MainWindow>
          <MenuBar>
            <Menu>
              {menu.map((m) => <MenuButton key={m} $hot={m === '特色功能'}>{m}</MenuButton>)}
            </Menu>
            <AppTitle>博易大师-一德期货</AppTitle>
            <WindowTools>
              <BigButton>
                <svg width="12" height="12" viewBox="0 0 12 12"><path d="M7 0 1 7h4l-2 5 8-8H6l3-4Z" fill="#f5a020" /></svg>
                交易
              </BigButton>
              <BigButton>
                <svg width="17" height="12" viewBox="0 0 17 12">
                  <path d="M1 1h15v7H9l-4 4V8H1Z" fill="#777" />
                  <path d="M4 4h2v2H4Zm4 0h2v2H8Zm4 0h2v2h-2Z" fill="#fff" />
                </svg>
                论坛
              </BigButton>
              <WindowButtons>
                {['M5 2.500h11', 'M6 0v3.500h10V0', 'M7 4l8-8M15 4 7-4'].map((d) => (
                  <button key={d} aria-label="窗口">
                    <svg width="20" height="6" viewBox="0 0 20 6"><path d={d} fill="none" stroke="#999" strokeWidth="2" /></svg>
                  </button>
                ))}
              </WindowButtons>
            </WindowTools>
          </MenuBar>
          <Tools />
          <Workspace>
            <SideTabs>
              <SideTab $active><span>s x</span><TabArrow /></SideTab>
              {sideTabs.map((t) => <SideTab key={t}><span>{t}</span></SideTab>)}
            </SideTabs>
            <Charts>
              <ChartHead>
                螺纹2205(010605)&lt;日线&gt;
                <HeadTools>
                  <a href="#overlay">商品叠加</a>
                  <a href="#period">周期</a>
                  <BoxIcon><path d="M2 7l4-4v2h7v4H6v2Z" /></BoxIcon>
                  <BoxIcon><path d="M14 7l-4-4v2H3v4h7v2Z" /></BoxIcon>
                  <BoxIcon><path d="M1 8.500h9M10.500 1v12M13.500 2v11" /></BoxIcon>
                </HeadTools>
              </ChartHead>
              <ChartPane
                top={60}
                height={370}
                ticks={[['6000', 107], ['5500', 167], ['5000', 227], ['4500', 286], ['4000', 346], ['3500', 406]]}
                legend={kLegend}
              >
                {trends.map(([x1, y1, x2, y2]) => (
                  <line key={x1} x1={x1} y1={y1} x2={x2} y2={y2} stroke="#0000ff" strokeWidth="3" shapeRendering="crispEdges" />
                ))}
                {candles.map((c, i) => <Candle key={i} data={c} i={i} />)}
                {overlays.map(([color, data], i) => <Curve key={i} color={color} data={thirds(data)} />)}
                {sar.map(([color, start, list]) => list.map((v, i) => (
                  <ellipse key={`${start}-${i}`} cx={X(start + i) + 0.5} cy={v / 3 + 0.5} rx="2" ry="2.200" fill="none" stroke={color} strokeWidth="1.300" />
                )))}
                {profile.map((x, i) => x && (
                  <rect key={i} x={x} y={112 + i * 15} width={1663 - x} height="10" fill="#4b4b00" style={{ mixBlendMode: 'screen' }} />
                ))}
                <g fill="#e4e4e4" fontFamily="Liberation Sans" fontWeight="bold" fontSize="12">
                  <text x="131" y="89">6198</text>
                  <text x="1163" y="379">3765</text>
                </g>
                <path d="M161 84.500h11M170 82v5M1193 374.500h11M1202 372v5" stroke="#e4e4e4" shapeRendering="crispEdges" />
              </ChartPane>
              <ChartPane
                top={431}
                height={109}
                ticks={[['150万', 485]]}
                legend={[['VOL(5,10)', GREY], ['VOLUME:1170056.0000', GREY], ['MAVOL1:1357734.6000', '#fff', true], ['MAVOL2:1322705.0000', YELLOW, true]]}
              >
                {volumes.map((v, i) => <Volume key={i} value={v} up={candles[i].up} i={i} />)}
                <Curve color="#f0f0f0" data={volumeLine(5, [[0, 21], [2, 17]])} />
                <Curve color="#e6e600" data={volumeLine(10, [[0, 40], [1, 28], [4, 19], [7, 14]])} />
              </ChartPane>
              <ChartPane top={541} height={109} ticks={[['5000', 598]]} legend={[['WTC(2)', GREY], ['WTC:4710.7500', '#fff', true]]}>
                <Curve color="#f0f0f0" data={wtc} />
              </ChartPane>
              <ChartPane top={651} height={109} ticks={[['4000', 678], ['0', 756, 748]]} legend={[['VROC(12)', GREY], ['-1.2292', '#fff', true]]}>
                <Curve color="#f0f0f0" data={vroc} />
              </ChartPane>
              <ChartPane
                top={761}
                height={109}
                ticks={[['100', 777], ['80', 795], ['50', 822], ['20', 849], ['0', 867, 858]]}
                legend={[['RSI(12,12,12)', GREY], ['RSI1:66.1400', '#fff', true], ['RSI2:66.1400', YELLOW, true], ['RSI3:66.1400', MAGENTA, true]]}
              >
                <Curve color="#ff38c8" data={rsi} />
              </ChartPane>
              <ChartPane
                top={871}
                height={119}
                selected
                ticks={[['0', 927]]}
                legend={[['DMA(10,50,10)', GREY], ['DDD:272.9400', '#fff', true], ['AMA:208.6580', YELLOW]]}
              >
                <Curve color="#f0f0f0" data={ddd} />
                <Curve color="#e6e600" data={ama} />
              </ChartPane>
              <DateAxis>
                <span>日线</span>
                <svg height="15" viewBox="72 0 1591 15" preserveAspectRatio="none">
                  {months.map(([m, x]) => <text key={m} x={x} y="11">{m}</text>)}
                </svg>
              </DateAxis>
            </Charts>
            <QuotePanel />
          </Workspace>
          <StatusBar>
            <Index $cols="12px 72px 64px auto" $color="#008000">沪<i>3555.06</i><i>-3.12</i>4597.02亿</Index>
            <Index $cols="12px 72px 64px auto" $color="#008000">深<i>14198.30</i><i>-8.89</i>6692.84亿</Index>
            <Index $cols="22px 62px 64px auto" $color="#ff2a2a">300<i>4823.51</i><i>+43.13</i>3043.44亿</Index>
            <StatusRight>
              <b>po<em>b</em>o</b>
              <svg width="22" height="14" viewBox="0 0 22 14" fill="none" stroke="#444">
                <path d="M0 1h10L5 7ZM5 2v11" strokeWidth="1.500" />
                <path d="M12 13v-3M15 13V8M18 13V5M21 13V2" strokeWidth="2" />
              </svg>
              15:25
            </StatusRight>
          </StatusBar>
        </MainWindow>
        <SecondWindow>
          <SecondHead />
          <svg width="12" height="22" viewBox="0 0 12 22"><path d="m5 11 7-7v14Z" fill="#ffc52e" stroke="#c8860a" /></svg>
          <SideTabs $right as="div">
            <SideTab $right $active aria-label="展开"><span /><TabArrow /></SideTab>
            {sideTabs.map((t) => <SideTab key={t} $right><span>{t}</span></SideTab>)}
          </SideTabs>
        </SecondWindow>
      </Windows>
      <TaskBar><span>15:25</span></TaskBar>
      <Watermark>5E天资5etz.com</Watermark>
    </Desktop>
  );
}

export default App;
